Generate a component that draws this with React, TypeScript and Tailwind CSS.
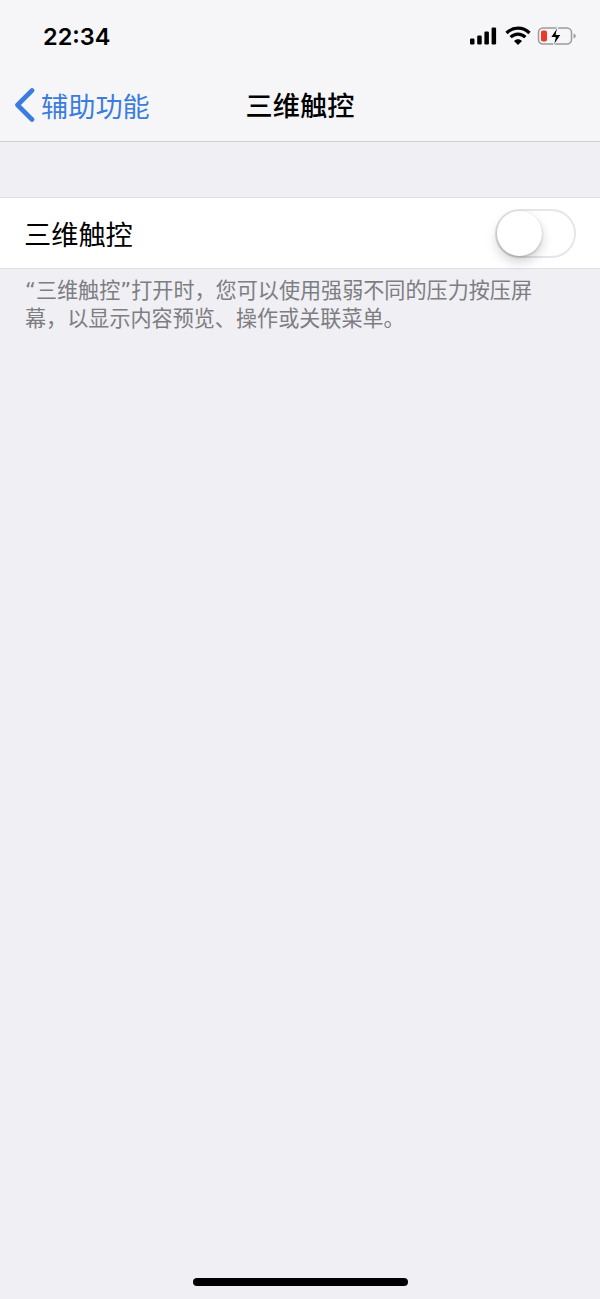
import React from 'react';

const cjk = 'font-["Noto_Sans_CJK_SC",sans-serif]';

const StatusIcons = () => (
  <svg width="108" height="24" viewBox="0 0 108 24" className="block">
    {/* signal */}
    <rect x="0" y="13.5" width="4.5" height="6" rx="1.2" fill="#000" />
    <rect x="7.2" y="10.5" width="4.5" height="9" rx="1.2" fill="#000" />
    <rect x="14.4" y="6.5" width="4.5" height="13" rx="1.2" fill="#000" />
    <rect x="21.6" y="2.5" width="4.5" height="17" rx="1.2" fill="#000" />
    {/* wifi */}
    <path d="M36.5 8C43 1.5 53 1.5 59.5 8" fill="none" stroke="#000" strokeWidth="3.2" />
    <path d="M40.6 12.2C45 8 51 8 55.4 12.2" fill="none" stroke="#000" strokeWidth="3.2" />
    <path d="M44 16C46.5 13.6 49.5 13.6 52 16L48 20Z" fill="#000" />
    {/* battery */}
    <rect x="68.5" y="3" width="33" height="16" rx="4.5" fill="none" stroke="#9a9a9c" strokeWidth="1.5" />
    <path d="M103.5 8.5v5c1.6-.5 2.4-1.4 2.4-2.5s-.8-2-2.4-2.5Z" fill="#a5a5a7" />
    <rect x="71" y="5.5" width="6" height="11" rx="1.8" fill="#e8392c" />
    <path d="M88 1.5 80.5 12.5h4.8l-2 8.5 7.8-11.5h-5L88 1.5Z" fill="#000" stroke="#f6f6f9" strokeWidth="1" />
  </svg>
);

const App: React.FC = () => {
  return (
    <div className={`relative flex h-[1299px] w-[600px] flex-col overflow-hidden bg-[#efeff4] ${cjk}`}>
      {/* Top bars */}
      <div className="h-[142px] shrink-0 border-b border-[#cfcfd2] bg-[#f6f6f9]">
        <div className="flex h-[72px] items-start justify-between pl-[43px] pr-[22px] pt-[22px]">
          <span className='font-["Inter",sans-serif] text-[23.5px] leading-[30px] font-semibold text-black'>22:34</span>
          <div className="pt-[3px]">
            <StatusIcons />
          </div>
        </div>
        <div className="relative flex h-[69px] items-center justify-center">
          <div className="absolute left-[14px] top-[16px] flex items-center gap-[6px] text-[#3b7ddd]">
            <svg width="21" height="34" viewBox="0 0 21 34" className="block">
              <path d="M18 2.5 3.5 17 18 31.5" fill="none" stroke="#3b7ddd" strokeWidth="4.6" strokeLinecap="round" strokeLinejoin="round" />
            </svg>
            <span className="text-[27.2px] leading-[34px]">辅助功能</span>
          </div>
          <span className="-mt-[5px] text-[27.2px] leading-[34px] font-medium text-black">三维触控</span>
        </div>
      </div>

      {/* Toggle row */}
      <div className="mt-[55px] flex h-[72px] shrink-0 items-center justify-between border-y border-[#e0e0e4] bg-white pl-[25px] pr-[24px]">
        <span className="-ml-[1px] text-[27.2px] leading-[34px] text-black">三维触控</span>
        <div className="relative h-[49px] w-[81px] rounded-full border-[2px] border-[#e6e6e8] bg-white">
          <div className="absolute left-0 top-0 h-[45px] w-[45px] rounded-full bg-white shadow-[0_6px_12px_rgba(0,0,0,0.18),0_1px_3px_rgba(0,0,0,0.2)]" />
        </div>
      </div>

      {/* Footer note */}
      <p className='pl-[25px] pr-[40px] pt-[8px] font-["DejaVu_Sans","Noto_Sans_CJK_SC",sans-serif] text-[21.1px] leading-[28px] text-[#7d7d82]'>
        “三维触控”打开时，您可以使用强弱不同的压力按压屏幕，以显示内容预览、操作或关联菜单。
      </p>

      {/* Home indicator */}
      <div className="absolute bottom-[13px] left-[193px] h-[8px] w-[215px] rounded-full bg-black" />
    </div>
  );
};

export default App;
